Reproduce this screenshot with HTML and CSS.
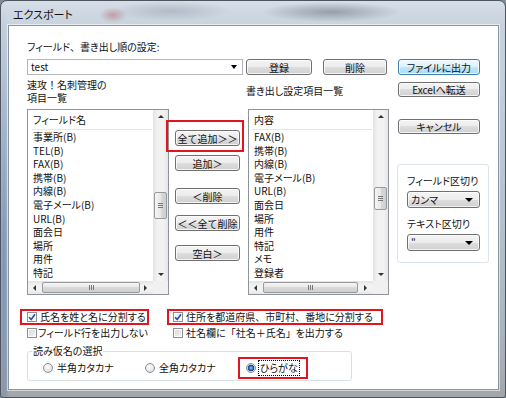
FILE: index.html
```html
<!DOCTYPE html>
<html lang="ja">
<head>
<meta charset="utf-8">
<title>エクスポート</title>
<link rel="stylesheet" href="styles.css">
</head>
<body>
<div class="window">
  <div class="titlebar"><span class="title">エクスポート</span></div>
  <div class="client">
    <div class="lbl-top">フィールド<span class="fw">、</span>書き出し順の設定:</div>
    <div class="row-setting">
      <div class="combo-edit"><span class="combo-text">test</span><span class="tri"></span></div>
      <button class="btn btn-reg">登録</button>
      <button class="btn btn-del">削除</button>
      <button class="btn btn-default btn-side">ファイルに出力</button>
    </div>
    <div class="row-labels">
      <div class="lbl-left"><div class="ln">速攻<span class="fw">！</span>名刺管理の</div><div class="ln">項目一覧</div></div>
      <div class="lbl-right">書き出し設定項目一覧</div>
      <button class="btn btn-side btn-excel">Excelへ転送</button>
    </div>
    <div class="row-lists">
      <div class="listbox list-left">
        <div class="list-body">
          <div class="list-head">フィールド名</div>
          <div class="item">事業所(B)</div>
          <div class="item">TEL(B)</div>
          <div class="item">FAX(B)</div>
          <div class="item">携帯(B)</div>
          <div class="item">内線(B)</div>
          <div class="item">電子メール(B)</div>
          <div class="item">URL(B)</div>
          <div class="item">面会日</div>
          <div class="item">場所</div>
          <div class="item">用件</div>
          <div class="item">特記</div>
        </div>
        <div class="vscroll">
          <span class="arr arr-up"></span>
          <span class="vthumb vthumb-left"><span class="grip-h"></span></span>
          <span class="arr arr-down"></span>
        </div>
        <div class="hscroll">
          <span class="arr arr-left"></span>
          <span class="hthumb hthumb-left"><span class="grip-v"></span></span>
          <span class="arr arr-right"></span>
        </div>
        <div class="corner"></div>
      </div>
      <div class="mid-buttons">
        <button class="btn btn-mid m1">全て追加＞＞</button>
        <button class="btn btn-mid m2">追加＞</button>
        <button class="btn btn-mid m3">＜削除</button>
        <button class="btn btn-mid m4">＜＜全て削除</button>
        <button class="btn btn-mid m5">空白＞</button>
      </div>
      <div class="listbox list-right">
        <div class="list-body">
          <div class="list-head">内容</div>
          <div class="item">FAX(B)</div>
          <div class="item">携帯(B)</div>
          <div class="item">内線(B)</div>
          <div class="item">電子メール(B)</div>
          <div class="item">URL(B)</div>
          <div class="item">面会日</div>
          <div class="item">場所</div>
          <div class="item">用件</div>
          <div class="item">特記</div>
          <div class="item">メモ</div>
          <div class="item">登録者</div>
        </div>
        <div class="vscroll">
          <span class="arr arr-up"></span>
          <span class="vthumb vthumb-right"><span class="grip-h"></span></span>
          <span class="arr arr-down"></span>
        </div>
        <div class="hscroll">
          <span class="arr arr-left"></span>
          <span class="hthumb hthumb-right"><span class="grip-v"></span></span>
          <span class="arr arr-right"></span>
        </div>
        <div class="corner"></div>
      </div>
      <div class="side">
        <button class="btn btn-side btn-cancel">キャンセル</button>
        <div class="sep-group">
          <div class="sep-label">フィールド区切り</div>
          <div class="combo-drop"><span class="combo-text">カンマ</span><span class="tri"></span></div>
          <div class="sep-label sep-label2">テキスト区切り</div>
          <div class="combo-drop"><span class="combo-text">"</span><span class="tri"></span></div>
        </div>
      </div>
    </div>
    <div class="row-checks">
      <label class="chk chk-a"><span class="cb checked"><svg viewBox="0 0 8 8" width="8" height="8"><path d="M1 4.2 L3.2 6.4 L7 1.2" fill="none" stroke="#2e4f9a" stroke-width="1.6"/></svg></span>氏名を姓と名に分割する</label>
      <label class="chk chk-b"><span class="cb checked"><svg viewBox="0 0 8 8" width="8" height="8"><path d="M1 4.2 L3.2 6.4 L7 1.2" fill="none" stroke="#2e4f9a" stroke-width="1.6"/></svg></span>住所を都道府県<span class="fw">、</span>市町村<span class="fw">、</span>番地に分割する</label>
    </div>
    <div class="row-checks row-checks2">
      <label class="chk chk-a chk-c"><span class="cb"></span>フィールド行を出力しない</label>
      <label class="chk chk-b"><span class="cb"></span>社名欄に<span class="fw">「</span>社名＋氏名<span class="fw">」</span>を出力する</label>
    </div>
    <fieldset class="kana">
      <legend>読み仮名の選択</legend>
      <div class="radios">
        <label class="rd rd1"><span class="radio"></span>半角カタカナ</label>
        <label class="rd rd2"><span class="radio"></span>全角カタカナ</label>
        <label class="rd rd3"><span class="radio on"></span><span class="focus">ひらがな</span></label>
      </div>
    </fieldset>
  </div>
  <span class="mark mark1"></span>
  <span class="mark mark2"></span>
  <span class="mark mark3"></span>
  <span class="mark mark4"></span>
</div>
</body>
</html>
```
FILE: styles.css
```css
* { box-sizing: border-box; }
html, body { margin: 0; padding: 0; }
body {
  width: 506px; height: 398px; overflow: hidden;
  background: #7f8c99;
  font-family: "Noto Sans CJK JP", "Noto Sans", sans-serif;
  font-size: 10px; color: #111;
  font-feature-settings: "palt";
}
.fw { font-feature-settings: normal; }
.window {
  position: relative;
  width: 506px; height: 398px;
  display: flex; flex-direction: column;
  padding: 0 6px 7px 7px;
  border: 1px solid #4d5660;
  border-radius: 7px 7px 3px 3px;
  background:
    radial-gradient(ellipse 14px 8px at 112px 14px, rgba(170,90,90,.45), transparent),
    radial-gradient(ellipse 60px 10px at 170px 10px, rgba(120,130,145,.35), transparent),
    radial-gradient(ellipse 70px 10px at 330px 11px, rgba(80,90,100,.45), transparent),
    radial-gradient(ellipse 6px 260px at 3px 260px, rgba(60,100,160,.45), transparent),
    linear-gradient(#d6dee7 0, #c8d3de 24px, #bcc8d4 150px, #aab4be 330px, #a2a6aa 100%);
}
.titlebar { height: 24px; display: flex; align-items: center; padding-left: 5px; }
.title { font-size: 11px; line-height: 12px; color: #111; margin-top: 2px; }
.client {
  flex: 1;
  background: #fff;
  border: 1px solid #8796a5;
  box-shadow: 0 0 0 1px rgba(255,255,255,.55);
  padding: 14px 0 0 18px;
  display: flex; flex-direction: column;
}
.lbl-top { line-height: 14px; height: 14px; }
.row-setting { display: flex; margin-top: 5px; height: 16px; }
.combo-edit {
  width: 216px; height: 16px;
  border: 1px solid #b4b7be;
  display: flex; align-items: center; justify-content: space-between;
  padding: 0 5px 0 3px; background: #fff;
}
.combo-text { line-height: 12px; }
.tri {
  width: 0; height: 0;
  border-left: 3.5px solid transparent; border-right: 3.5px solid transparent;
  border-top: 4px solid #000;
}
.btn {
  font: inherit; color: #111; padding: 0;
  height: 16px; line-height: 13px;
  border: 1px solid #707070; border-radius: 3px;
  background: linear-gradient(#f4f4f4 0%, #ececec 50%, #dedede 50%, #d0d0d0 100%);
  box-shadow: inset 0 0 0 1px rgba(255,255,255,.75);
}
.btn-reg { width: 66px; margin-left: 3px; }
.btn-del { width: 64px; margin-left: 11px; }
.btn-side { width: 82px; margin-left: 11px; }
.btn-default {
  border-color: #3c7fb1;
  background: linear-gradient(#eef8fe 0%, #dcf1fc 50%, #c2e7fb 50%, #a9daf5 100%);
}
.row-labels { display: flex; margin-top: 4px; height: 26px; }
.lbl-left { width: 219px; display: flex; flex-direction: column; }
.lbl-left .ln { line-height: 12px; height: 12.5px; }
.lbl-right { width: 152px; line-height: 12px; margin-top: 6px; }
.btn-excel { margin-left: 0; margin-top: 3px; height: 15px; line-height: 12px; }
.row-lists { display: flex; margin-top: 4px; height: 186px; }
.listbox {
  border: 1px solid #8f949b;
  display: grid;
  grid-template-columns: 1fr 15px;
  grid-template-rows: 1fr 13px;
  background: #fff;
}
.list-left { width: 142px; }
.list-right { width: 141px; }
.list-body { overflow: hidden; padding: 0 1px 0 4px; }
.list-head { height: 20px; line-height: 20px; border-bottom: 1px solid #e6e6e6; padding-left: 1px; }
.item { line-height: 13.6px; height: 13.6px; padding-left: 1px; }
.vscroll {
  display: flex; flex-direction: column; align-items: center;
  background: linear-gradient(to right, #e3e3e3, #f2f2f2 30%, #f2f2f2 70%, #e6e6e6);
  position: relative;
}
.hscroll {
  display: flex; align-items: center;
  background: linear-gradient(#e3e3e3, #f2f2f2 30%, #f2f2f2 70%, #e6e6e6);
}
.corner { background: #f0f0f0; }
.arr { width: 0; height: 0; flex: none; }
.arr-up { margin-top: 5px; border-left: 3px solid transparent; border-right: 3px solid transparent; border-bottom: 3px solid #333; }
.arr-down { margin-top: auto; margin-bottom: 5px; border-left: 3px solid transparent; border-right: 3px solid transparent; border-top: 3px solid #333; }
.arr-left { margin-left: 5px; border-top: 3px solid transparent; border-bottom: 3px solid transparent; border-right: 3px solid #333; }
.arr-right { margin-left: auto; margin-right: 6px; border-top: 3px solid transparent; border-bottom: 3px solid transparent; border-left: 3px solid #333; }
.vthumb {
  width: 13px; flex: none;
  border: 1px solid #979a9e; border-radius: 2px;
  background: linear-gradient(to right, #f5f5f5, #e8e8e8 50%, #d9d9d9 50%, #cfcfcf);
  display: flex; align-items: center; justify-content: center;
}
.vthumb-left { margin-top: 74px; height: 27px; }
.vthumb-right { margin-top: 69px; height: 23px; }
.grip-h { width: 5px; height: 5px; border-top: 1px solid #777; border-bottom: 1px solid #777; position: relative; }
.grip-h::after { content: ""; position: absolute; left: 0; right: 0; top: 1px; border-top: 1px solid #777; }
.hthumb {
  height: 11px; flex: none;
  border: 1px solid #979a9e; border-radius: 2px;
  background: linear-gradient(#f5f5f5, #e8e8e8 50%, #d9d9d9 50%, #cfcfcf);
  display: flex; align-items: center; justify-content: center;
}
.hthumb-left { width: 98px; margin-left: 6px; }
.hthumb-right { width: 95px; margin-left: 6px; }
.grip-v { width: 5px; height: 5px; border-left: 1px solid #777; border-right: 1px solid #777; position: relative; }
.grip-v::after { content: ""; position: absolute; top: 0; bottom: 0; left: 1px; border-left: 1px solid #777; }
.mid-buttons { width: 79px; display: flex; flex-direction: column; padding-left: 6px; }
.btn-mid { width: 65px; font-feature-settings: normal; }
.m1 { margin-top: 21px; }
.m2 { margin-top: 9px; }
.m3 { margin-top: 17px; }
.m4 { margin-top: 11px; }
.m5 { margin-top: 14px; }
.side { display: flex; flex-direction: column; margin-left: 8px; }
.btn-cancel { margin-left: 1px; margin-top: 10px; height: 15px; line-height: 12px; }
.sep-group {
  width: 92px; height: 99px; margin-top: 30px;
  border: 1px solid #dce3e9; border-radius: 3px;
  padding: 10px 0 0 9px;
}
.sep-label { line-height: 12px; height: 12px; }
.sep-label2 { margin-top: 10px; }
.combo-drop {
  width: 73px; height: 17px; margin-top: 4px;
  border: 1px solid #707070; border-radius: 3px;
  background: linear-gradient(#f4f4f4 0%, #ececec 50%, #dedede 50%, #d0d0d0 100%);
  box-shadow: inset 0 0 0 1px rgba(255,255,255,.7);
  display: flex; align-items: center; justify-content: space-between;
  padding: 0 6px 0 3px;
}
.combo-drop .tri { border-left-width: 4px; border-right-width: 4px; border-top-width: 4px; }
.row-checks { display: flex; margin-top: 14px; height: 15px; align-items: center; }
.row-checks2 { margin-top: 2px; height: 14px; }
.chk { display: flex; align-items: center; line-height: 12px; }
.chk-a { width: 146px; }
.chk-c { width: 146px; }
.cb {
  width: 10px; height: 10px; flex: none; margin-right: 3px;
  border: 1px solid #8e8f8f;
  background: linear-gradient(135deg, #d6d9de, #f4f4f4);
  box-shadow: inset 0 0 0 1px #fff;
  display: flex; align-items: center; justify-content: center;
}
.cb.checked { background: linear-gradient(135deg, #e9ecf1, #fafafa); }
.chk-c .cb { margin-right: 1px; }
.kana {
  margin: 5px 0 0 0; padding: 0 0 2px 0;
  width: 325px; min-width: 0;
  border: 1px solid #d8e0e6; border-radius: 3px;
}
.kana legend { padding: 0 1px; margin-left: 4px; line-height: 12px; }
.radios { display: flex; height: 21px; align-items: center; padding-left: 15px; }
.rd { display: flex; align-items: center; line-height: 12px; }
.rd1 { width: 102px; }
.rd2 { width: 101px; }
.radio {
  width: 10px; height: 10px; border-radius: 50%; flex: none; margin-right: 4px;
  border: 1px solid #8e8f8f;
  background: radial-gradient(circle at 40% 35%, #fdfdfd, #d3d6db);
}
.radio.on {
  margin-right: 2px;
  background: radial-gradient(circle at 50% 50%, #8fd0ff 0, #2a70c4 2px, #153f86 3px, #d9dde3 3.6px, #f2f2f2 100%);
}
.focus { border: 1px dotted #000; padding: 1px 1px; line-height: 12px; }
.mark { position: absolute; border: 2px solid #e3141e; }
.mark1 { left: 165px; top: 119px; width: 78px; height: 32px; }
.mark2 { left: 19px; top: 308px; width: 129px; height: 16px; }
.mark3 { left: 166px; top: 308px; width: 216px; height: 16px; }
.mark4 { left: 237px; top: 356px; width: 70px; height: 22px; }
```
